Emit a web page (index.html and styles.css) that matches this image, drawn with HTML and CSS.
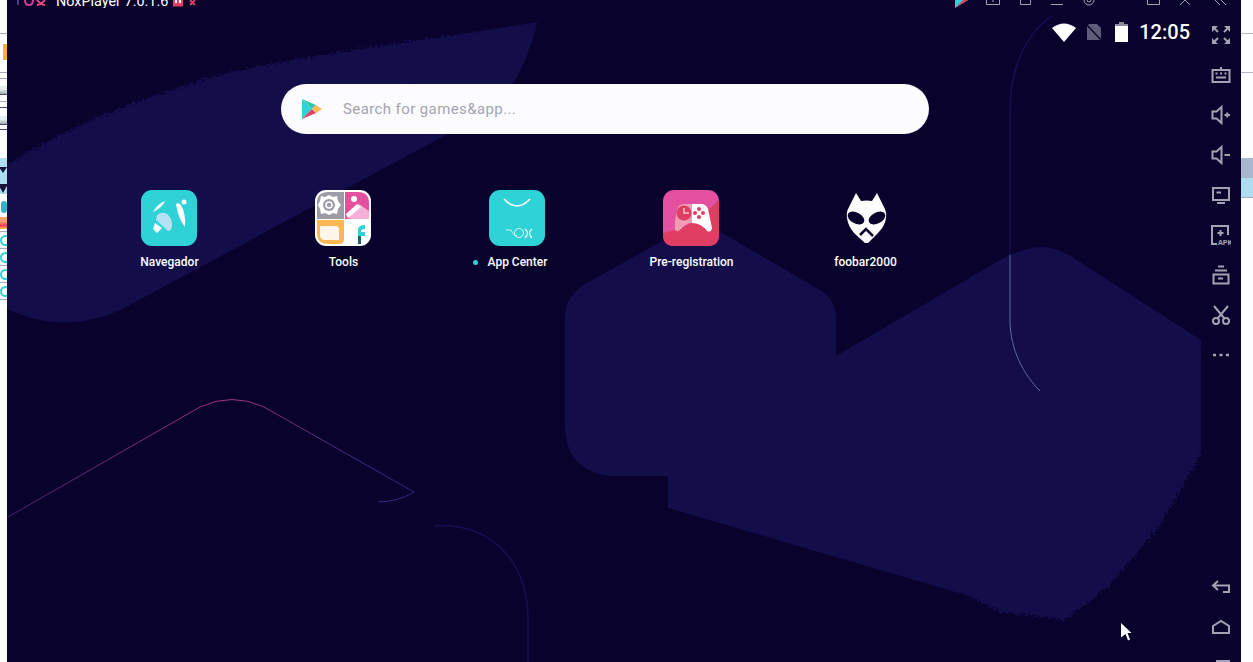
FILE: index.html
```html
<!DOCTYPE html>
<html lang="en">
<head>
    <meta charset="UTF-8">
    <title>NoxPlayer</title>
    <link rel="stylesheet" href="styles.css">
</head>
<body>
    <div class="desktop">
        <div class="left-strip">
            <div class="scrap h34"></div>
            <div class="scrap h39"><i class="orange"></i></div>
            <div class="scrap h6"></div>
            <div class="scrap h16 dark"><i class="thumb"></i></div>
            <div class="scrap h7"></div>
            <div class="scrap h6 dark"></div>
            <div class="scrap h17 dark"><i class="thumb"></i></div>
            <div class="scrap h5 dark"></div>
            <div class="scrap h28 plain"></div>
            <div class="scrap h36 plain blue"><i class="arrow small"></i><i class="arrow"></i></div>
            <div class="scrap h21 plain"><i class="teal-pin"></i></div>
            <div class="scrap h17"><i class="cone"></i></div>
            <div class="scrap h17"><i class="ring"></i></div>
            <div class="scrap h17"><i class="ring"></i></div>
            <div class="scrap h17"><i class="ring"></i></div>
            <div class="scrap h17"><i class="ring"></i></div>
        </div>

        <main class="stage">
            <svg class="wallpaper" width="1234" height="662" viewBox="7 0 1234 662">
                <defs>
                    <filter id="rough" x="-10%" y="-10%" width="120%" height="120%" color-interpolation-filters="sRGB">
                        <feTurbulence type="fractalNoise" baseFrequency="0.45" numOctaves="2" seed="4"/>
                        <feDisplacementMap in="SourceGraphic" scale="11" xChannelSelector="R" yChannelSelector="G"/>
                    </filter>
                    <linearGradient id="pinkLine" gradientUnits="userSpaceOnUse" x1="8" y1="0" x2="414" y2="0">
                        <stop offset="0" stop-color="#4a2270"/>
                        <stop offset="0.55" stop-color="#a52f78"/>
                        <stop offset="0.8" stop-color="#4d2a7a"/>
                        <stop offset="1" stop-color="#2c2a80"/>
                    </linearGradient>
                </defs>
                <path class="shape" d="M537 22 C430 40 300 58 220 80 C140 102 70 130 7 170 L7 309 C40 325 85 330 130 305 L470 122 C500 105 522 85 537 22Z"/>
                <path class="shape rough" d="M537 24 C430 40 300 55 220 75 C140 98 70 125 7 165 L7 200 L300 120 L530 40Z"/>
                <path class="shape" d="M700 220 L820 290 Q836 300 836 318 L836 356 L1000 260 Q1012 253 1024 250 Q1050 240 1080 262 L1201 340 L1201 450 L1150 530 L1060 610 L1000 605 L668 508 L668 476 L610 476 Q565 470 565 425 L565 318 Q565 296 585 284Z"/>
                <path class="shape rough" d="M1201 455 L1160 525 L1110 585 L1065 620 L1000 612 L900 560 L1000 450 L1180 400Z"/>
                <path class="line-pink" d="M8 517 L200 407 Q232 392 264 407 L414 492 Q398 502 378 502"/>
                <path class="line-blue" d="M434 526 C490 522 528 560 528 620 L528 662"/>
                <path class="line-blue" d="M1052 16 C1025 34 1010 70 1010 110 L1010 255"/>
                <path class="line-pale" d="M1010 255 L1010 320 C1010 350 1024 375 1040 391"/>
            </svg>

            <div class="title-bar">
                <svg class="nox-logo" width="32" height="8" viewBox="0 0 32 8">
                    <path d="M2 0V5" stroke="#47407f" stroke-width="2"/>
                    <path d="M9 0Q9 5 13 5Q17 5 17 0" fill="none" stroke="#c93f96" stroke-width="2"/>
                    <path d="M21 0Q25 5 29 5M29 0Q25 5 21 5" fill="none" stroke="#e8467a" stroke-width="2"/>
                </svg>
                <span class="title-text">NoxPlayer 7.0.1.6</span>
                <svg class="badge" width="23" height="7" viewBox="0 0 23 7">
                    <rect width="10" height="6.500" fill="#e03d63"/>
                    <path d="M3 0V3M7 0V3" stroke="#fff" stroke-width="2"/>
                    <path d="M17 0L22 5M22 0L17 5" stroke="#e03d63" stroke-width="2"/>
                </svg>
                <svg class="title-icons" width="286" height="8" viewBox="0 0 286 8">
                    <path d="M6 0H19L6 8Z" fill="#2fd2d6"/>
                    <path d="M14 0L19 0L6 8Z" fill="#e23d63"/>
                    <path d="M37.500 0V4.500H50.500V0M44 0V2" class="t-line"/>
                    <path d="M71.500 0V4.500H81.500V0" class="t-line"/>
                    <path d="M102 4.500H114" class="t-line"/>
                    <circle cx="140" cy="0" r="5" class="t-line"/>
                    <circle cx="140" cy="0" r="2" class="t-line"/>
                    <path d="M198.500 0V4.500H210.500V0" class="t-line"/>
                    <path d="M231 5L236 0L241 5" class="t-line"/>
                    <path d="M266 0L271 5M272 0L277 5" class="t-line"/>
                </svg>
            </div>

            <div class="body-row">
                <section class="screen">
                    <div class="status-row">
                        <svg class="wifi" width="24" height="19" viewBox="0 0 24 19"><path d="M0 5Q12 -4 24 5L12 19Z" fill="#fff"/></svg>
                        <svg class="sim" width="16" height="18" viewBox="0 0 16 18">
                            <path d="M3 1H11L15 5V17H1V3Z" fill="#5f5c78"/>
                            <path d="M0 1L16 18" stroke="#08022d" stroke-width="1.500"/>
                        </svg>
                        <svg class="battery" width="13" height="20" viewBox="0 0 13 20"><path d="M4 0H9V2H13V20H0V2H4Z" fill="#fff"/><rect y="0" width="13" height="4" fill="#8c8a9e"/><rect x="0" y="0" width="4" height="2" fill="#08022d"/><rect x="9" y="0" width="4" height="2" fill="#08022d"/></svg>
                        <span class="clock">12:05</span>
                    </div>

                    <div class="search-bar">
                        <svg width="22" height="22" viewBox="0 0 22 22">
                            <path d="M1 1V21L11 11Z" fill="#2fd2d6"/>
                            <path d="M1 1L15 7L11 11Z" fill="#2fc9a8"/>
                            <path d="M1 21L15 15L11 11Z" fill="#e23d63"/>
                            <path d="M15 7L21 11L15 15L11 11Z" fill="#fdb754"/>
                        </svg>
                        <span class="search-hint">Search for games&amp;app...</span>
                    </div>

                    <div class="apps">
                        <div class="app">
                            <svg class="app-icon" width="56" height="56" viewBox="0 0 56 56">
                                <rect width="56" height="56" rx="11" fill="#2fd2d6"/>
                                <path d="M12 22Q16 14 24 11Q21 18 12 22Z" fill="#fff"/>
                                <path d="M35 14Q38 12 40 15Q45 24 44 37Q37 28 35 14Z" fill="#fff"/>
                                <circle cx="43" cy="12" r="2.500" fill="#fff"/>
                                <path d="M16 25Q21 21 26 24Q32 29 31 37Q30 41 27 41L15 30Z" fill="#b5e2f2"/>
                                <path d="M14 33L21 38L16 43L12 39Z" fill="#fff"/>
                            </svg>
                            <span class="app-name">Navegador</span>
                        </div>
                        <div class="app">
                            <svg class="app-icon" width="56" height="56" viewBox="0 0 56 56">
                                <rect width="56" height="56" rx="11" fill="#fff"/>
                                <path d="M2 13Q2 2 13 2H29V29H2Z" fill="#9d9ba8"/>
                                <path d="M30 2H43Q54 2 54 13V29H30Z" fill="#e2509f"/>
                                <path d="M31 26L44 14L54 21V29H36Z" fill="#f4b0d6"/>
                                <path d="M31 24L42 14L46 17L33 28Z" fill="#fff"/>
                                <circle cx="39" cy="9" r="3" fill="#fff"/>
                                <path d="M2 30H29V49Q29 54 24 54H13Q2 54 2 43Z" fill="#fdb754"/>
                                <path d="M5 36H22L24 38V50H10Q5 50 5 45Z" fill="#fdf7ea"/>
                                <path d="M14 5L18 7L22 6L23 11L26 15L23 19L22 24L18 23L14 25L10 23L6 24L5 19L3 15L5 11L6 6L10 7Z" fill="#fff"/>
                                <circle cx="14" cy="15" r="6" fill="#9d9ba8"/>
                                <circle cx="14" cy="15" r="3" fill="none" stroke="#fff" stroke-width="1.500"/>
                                <path d="M43 45V40Q43 35 50 35V39Q46 39 46 41V42H50V46H46V47H43Z" fill="#2fd2d6"/>
                                <rect x="43" y="46" width="3" height="8" fill="#20606e"/>
                            </svg>
                            <span class="app-name">Tools</span>
                        </div>
                        <div class="app">
                            <svg class="app-icon" width="56" height="56" viewBox="0 0 56 56">
                                <rect width="56" height="56" rx="11" fill="#2fd2d6"/>
                                <path d="M15 9Q28 23 41 9" fill="none" stroke="#fff" stroke-width="1.600"/>
                                <path d="M17 40H22Q24 46 28 46" fill="none" stroke="#c9f1f2"/>
                                <circle cx="30" cy="43" r="4.500" fill="none" stroke="#e8fafa"/>
                                <path d="M36 39Q41 43 36 48M43 39Q38 43 43 48" fill="none" stroke="#fff" stroke-width="1.200"/>
                            </svg>
                            <span class="app-name"><i class="new-dot"></i>App Center</span>
                        </div>
                        <div class="app">
                            <svg class="app-icon" width="56" height="56" viewBox="0 0 56 56">
                                <rect width="56" height="56" rx="11" fill="#e2509f"/>
                                <path d="M0 45V43Q32 38 56 9V45Q56 56 45 56H11Q0 56 0 45Z" fill="#e03d63"/>
                                <path d="M15 17Q17 14 22 14H29V33Q23 33 19 38Q15 43 12 40Q11 30 15 17Z" fill="#ef9db4"/>
                                <path d="M29 14H38Q43 14 45 19L49 38Q48 43 44 41Q38 33 29 33Z" fill="#fff"/>
                                <circle cx="21" cy="23" r="7.500" fill="#e03d63"/>
                                <path d="M21 18V23H26" fill="none" stroke="#f6c3d0" stroke-width="1.500"/>
                                <circle cx="32" cy="23" r="2" fill="#e03d63"/>
                                <circle cx="40" cy="23" r="2" fill="#e03d63"/>
                                <circle cx="36" cy="19" r="2" fill="#e03d63"/>
                                <circle cx="36" cy="27" r="2" fill="#e03d63"/>
                            </svg>
                            <span class="app-name">Pre-registration</span>
                        </div>
                        <div class="app">
                            <svg class="app-icon" width="56" height="56" viewBox="0 0 56 56">
                                <path d="M19 3L24 11Q30 10 35 11L40 3L47 17Q50 23 49 28Q48 36 41 43L31 53H28L17 43Q11 36 10 28Q9 22 12 17Z" fill="#fdfdfd"/>
                                <ellipse cx="19" cy="28" rx="9" ry="5.500" transform="rotate(28 19 28)" fill="#08022d"/>
                                <ellipse cx="40" cy="28" rx="9" ry="5.500" transform="rotate(-28 40 28)" fill="#08022d"/>
                                <path d="M23 45L29 39L36 46" fill="none" stroke="#08022d" stroke-width="2.500"/>
                            </svg>
                            <span class="app-name">foobar2000</span>
                        </div>
                    </div>
                </section>

                <aside class="toolbar">
                    <div class="tool-group">
                        <svg class="tool" width="20" height="20" viewBox="0 0 20 20">
                            <path class="solid" d="M1 1H7L1 7ZM19 1H13L19 7ZM1 19H7L1 13ZM19 19H13L19 13Z"/>
                            <path d="M3 3L7 7M17 3L13 7M3 17L7 13M17 17L13 13"/>
                        </svg>
                        <svg class="tool" width="20" height="20" viewBox="0 0 20 20"><path d="M1.500 5H18.500V17H1.500ZM5 12.500H15M4.500 8.500H6.500M9 8.500H11M13.500 8.500H15.500M10 5V2"/></svg>
                        <svg class="tool" width="20" height="20" viewBox="0 0 20 20"><path d="M1.500 6.500H5.500L10.500 2V18L5.500 13.500H1.500ZM13.500 10H19M16.200 7.500V12.500"/></svg>
                        <svg class="tool" width="20" height="20" viewBox="0 0 20 20"><path d="M1.500 6.500H5.500L10.500 2V18L5.500 13.500H1.500ZM13.500 10H19"/></svg>
                        <svg class="tool" width="20" height="20" viewBox="0 0 20 20"><path d="M2 3H18V15H2ZM5.500 7.500H10M6 18H14"/></svg>
                        <svg class="tool" width="20" height="20" viewBox="0 0 20 20"><path d="M17 10V1H1V19H6M9.500 5V11M6.500 8H12.500"/><text x="7" y="19.500" class="apk-text">APK</text></svg>
                        <svg class="tool" width="20" height="20" viewBox="0 0 20 20"><path d="M7 1.500H13M4 5.500H16M2.500 9.500H17.500V18.500H2.500ZM7 13.500H12"/></svg>
                        <svg class="tool" width="20" height="20" viewBox="0 0 20 20"><path d="M3 1L13.500 13.500M17 1L6.500 13.500"/><circle cx="5" cy="16" r="3"/><circle cx="15" cy="16" r="3"/></svg>
                        <svg class="tool" width="20" height="20" viewBox="0 0 20 20"><path d="M2 10H5M8.500 10H11.500M15 10H18" stroke-width="2.500"/></svg>
                    </div>
                    <div class="tool-group nav-group">
                        <svg class="tool" width="20" height="20" viewBox="0 0 20 20"><path d="M7 4L2 8.500L7 13M2 8.500H18V15H12"/></svg>
                        <svg class="tool" width="20" height="20" viewBox="0 0 20 20"><path d="M2 9L10 4L18 9V16H2Z"/></svg>
                        <div class="recent-icon"></div>
                    </div>
                </aside>
            </div>

            <svg class="cursor" width="12" height="19" viewBox="0 0 12 19"><path d="M0 0L10.500 10H6.500L9 16.500L7 17.500L4.500 11L0 14.500Z" fill="#fff"/></svg>
        </main>

        <div class="right-strip">
            <div class="rule first"></div>
            <div class="rule second"></div>
            <div class="band-grey"></div>
            <div class="band-blue"></div>
        </div>
    </div>
</body>
</html>
```

FILE: styles.css
```css
html, body {
    margin: 0;
    height: 100%;
    overflow: hidden;
    background: #fdfdff;
}

.desktop {
    display: flex;
    height: 662px;
}

/* scraps of the window behind the emulator */
.left-strip {
    width: 7px;
    flex: none;
    display: flex;
    flex-direction: column;
    overflow: hidden;
    background: #fdfdff;
}

.scrap {
    box-sizing: border-box;
    flex: none;
    border-bottom: 1px solid #a8a8b4;
    overflow: hidden;
    position: relative;
}

.scrap i {
    display: block;
    position: absolute;
}

.h5 { height: 5px; }
.h6 { height: 6px; }
.h7 { height: 7px; }
.h16 { height: 16px; }
.h17 { height: 17px; }
.h21 { height: 21px; }
.h28 { height: 28px; }
.h34 { height: 34px; }
.h36 { height: 36px; }
.h39 { height: 39px; }

.dark { border-bottom-color: #4a4a68; }
.plain { border-bottom: 0; }
.blue { background: #aedcf0; }

.orange { left: 3px; top: 10px; width: 4px; height: 16px; background: #fbb03b; }
.thumb { left: 0; bottom: 0; width: 7px; height: 8px; background: linear-gradient(#e8eef0 40%, #a0aab0); }
.arrow { left: -2px; top: 26px; width: 0; height: 0; border: 5px solid transparent; border-top: 9px solid #15123a; border-bottom: 0; }
.arrow.small { top: 9px; left: -1px; border-width: 4px; border-top-width: 6px; border-bottom: 0; }
.teal-pin { left: 1px; top: 7px; width: 6px; height: 12px; border-radius: 3px; background: #33b5c6; }
.cone { left: 0; top: 2px; width: 7px; height: 12px; background: linear-gradient(#f4a26a 40%, #e83a52 70%, #fbc04a); }
.ring { left: 0; top: 3px; width: 7px; height: 7px; border: 2px solid #2fd2d6; border-radius: 50%; }

.right-strip {
    flex: 1;
    display: flex;
    flex-direction: column;
    background: #fdfdff;
}

.rule {
    height: 1px;
    background: #b4b4c0;
}

.rule.first { margin-top: 33px; }
.rule.second { margin-top: 38px; }

.band-grey {
    height: 20px;
    margin-top: 85px;
    background: #a8b6d0;
}

.band-blue {
    height: 19px;
    background: #aedcf0;
    border-bottom: 1px solid #a8a8b4;
}

/* emulator window */
.stage {
    position: relative;
    width: 1234px;
    flex: none;
    background: #08022d;
    overflow: hidden;
    font-family: Roboto, "Liberation Sans", sans-serif;
}

.wallpaper {
    position: absolute;
    left: 0;
    top: 0;
}

.shape { fill: #130d4a; }
.rough { filter: url(#rough); }
.line-pink { fill: none; stroke: url(#pinkLine); stroke-width: 1; }
.line-blue { fill: none; stroke: #171050; stroke-width: 1.5; }
.line-pale { fill: none; stroke: #5d6aa0; stroke-width: 1; }

.title-bar {
    position: relative;
    height: 8px;
    display: flex;
    align-items: flex-end;
    overflow: hidden;
}

.nox-logo {
    margin-left: 9px;
    flex: none;
}

.title-text {
    margin-left: 8px;
    color: #fff;
    font-size: 14.4px;
    line-height: 15px;
    margin-bottom: -1px;
    white-space: nowrap;
}

.badge {
    flex: none;
    margin: 0 0 1px 5px;
    align-self: flex-start;
}

.title-icons {
    margin-left: auto;
    flex: none;
    margin-right: 6px;
}

.t-line {
    fill: none;
    stroke: #a3a1b3;
    stroke-width: 1;
}

.body-row {
    position: relative;
    display: flex;
    height: 654px;
}

.screen {
    width: 1194px;
    flex: none;
}

.status-row {
    display: flex;
    align-items: center;
    height: 20px;
    padding: 14px 11px 0 0;
    justify-content: flex-end;
}

.sim { margin-left: 10px; }
.battery { margin-left: 13px; }

.clock {
    margin-left: 11px;
    color: #fff;
    font-size: 20px;
    font-weight: 500;
    line-height: 20px;
}

.search-bar {
    display: flex;
    align-items: center;
    width: 648px;
    height: 50px;
    margin: 42px 0 0 274px;
    padding-left: 20px;
    box-sizing: border-box;
    background: #fcfcfe;
    border-radius: 25px;
}

.search-hint {
    margin-left: 20px;
    color: #a5a3b0;
    font-size: 15px;
    letter-spacing: 0.4px;
}

.apps {
    display: grid;
    grid-template-columns: repeat(5, 174px);
    margin: 56px 0 0 75px;
}

.app {
    display: flex;
    flex-direction: column;
    align-items: center;
}

.app-icon {
    display: block;
}

.app-name {
    position: relative;
    margin: 9px 0 0 1px;
    color: #fff;
    font-size: 12px;
    font-weight: 500;
    line-height: 15px;
}

.new-dot {
    position: absolute;
    left: -15px;
    top: 5px;
    width: 5px;
    height: 5px;
    border-radius: 50%;
    background: #2fd2d6;
}

.toolbar {
    width: 40px;
    flex: none;
    display: flex;
    flex-direction: column;
    justify-content: space-between;
    align-items: center;
}

.tool-group {
    display: flex;
    flex-direction: column;
    align-items: center;
    gap: 20px;
    padding-top: 17px;
}

.nav-group {
    height: 85px;
    padding-top: 0;
    box-sizing: border-box;
    overflow: hidden;
}

.tool {
    display: block;
    flex: none;
    fill: none;
    stroke: #a3a1b3;
    stroke-width: 2;
}

.tool .solid {
    fill: #a3a1b3;
    stroke: none;
}

.apk-text {
    fill: #a3a1b3;
    stroke: none;
    font-size: 8px;
    font-weight: 700;
    font-family: "Liberation Mono", monospace;
}

.recent-icon {
    width: 14px;
    height: 14px;
    flex: none;
    background: #a3a1b3;
    margin: 3px 0 0 4px;
}

.cursor {
    position: absolute;
    left: 1114px;
    top: 623px;
}
```
